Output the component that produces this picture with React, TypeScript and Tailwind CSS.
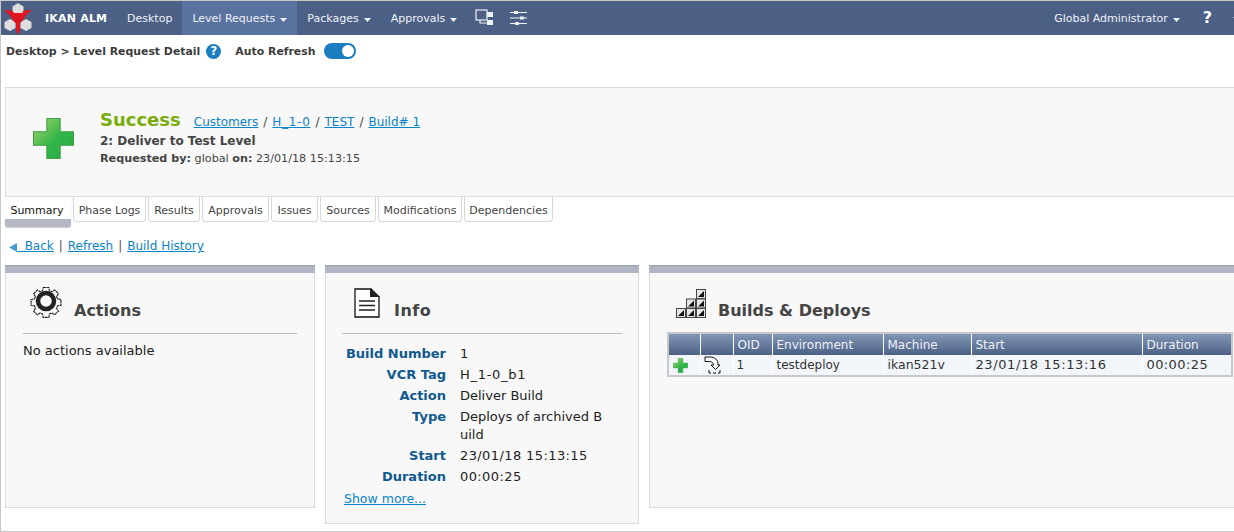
const font = "font-['DejaVu_Sans',Verdana,sans-serif]";

const Caret = () => (
  <svg width="7" height="4" viewBox="0 0 7 4" className="ml-[5px] mt-[2px]">
    <path d="M0 0h7L3.500 4z" fill="#eef1f6" />
  </svg>
);

const Logo = () => (
  <svg width="34" height="34" viewBox="0 0 34 34">
    <g fill="#dedede">
      <path d="M17 2l5.500 3.500v6L17 15l-5.500-3.500v-6z" />
      <path d="M9 18l5.500 3v6L9 30l-5.500-3v-6z" />
      <path d="M25 18l5.500 3v6L25 30l-5.500-3v-6z" />
    </g>
    <path d="M3 9l8 .5 2 2.500h8l2-2.500 8-.5-6 5-3 5-3 3v7L17 34l-2-4.500v-7l-3-3-3-5z" fill="#e0141c" />
  </svg>
);

const PlusIcon = ({ size, id }: { size: number; id: string }) => (
  <svg width={size} height={size} viewBox="0 0 40 40">
    <defs>
      <linearGradient id={id} x1="0" y1="0" x2="1" y2="1">
        <stop offset="0" stopColor="#a8d46a" />
        <stop offset="0.55" stopColor="#2fb54a" />
        <stop offset="1" stopColor="#2aa845" />
      </linearGradient>
    </defs>
    <path d="M13.500.5h13v13h13v13h-13v13h-13v-13H.5v-13h13z" fill={`url(#${id})`} stroke="#3f9f45" />
  </svg>
);

const Gear = () => (
  <svg width="34" height="34" viewBox="0 0 34 34">
    <circle cx="17" cy="17" r="8" fill="none" stroke="#222" strokeWidth="4.500" />
    <path
      d="M14 2.500h6l.7 3.600 2.600 1.100 3-2 4 4-2 3 1.100 2.600 3.600.7v6l-3.600.7-1.100 2.600 2 3-4 4-3-2-2.600 1.100-.7 3.600h-6l-.7-3.600-2.600-1.100-3 2-4-4 2-3-1.100-2.600-3.600-.7v-6l3.600-.7 1.100-2.600-2-3 4-4 3 2 2.600-1.100z"
      transform="translate(1.100 1.100) scale(0.935)"
      fill="none"
      stroke="#222"
      strokeWidth="1.200"
      strokeDasharray="3 0.6"
    />
  </svg>
);

const Doc = () => (
  <svg width="26" height="30" viewBox="0 0 26 30">
    <path d="M1 1h16l8 8v20H1z" fill="#fff" stroke="#111" strokeWidth="1.300" />
    <path d="M16 0l10 9H16z" fill="#222" />
    <path d="M5 13h16M5 17.500h16M5 22h16" stroke="#222" strokeWidth="1.600" />
  </svg>
);

const Block = ({ x, y }: { x: number; y: number }) => (
  <g transform={`translate(${x} ${y})`}>
    <rect x="0.5" y="0.5" width="9" height="9" fill="#e6e6e6" stroke="#444" />
    <path d="M2 8l6-6v6z" fill="#111" />
  </g>
);

const Blocks = () => (
  <svg width="30" height="29" viewBox="0 0 30 29">
    <Block x={20} y={0} />
    <Block x={10} y={9.500} />
    <Block x={20} y={9.500} />
    <Block x={0} y={19} />
    <Block x={10} y={19} />
    <Block x={20} y={19} />
  </svg>
);

const DeployIcon = () => (
  <svg width="18" height="18" viewBox="0 0 18 18">
    <path d="M1 1h5c5 0 8 3 8 7v1h2l-4.500 4.500L7 9h2.500c0-2-1.500-3.500-4-3.500H1z" fill="#fff" stroke="#111" strokeWidth="1" />
    <path d="M5 14v3h2M16 14v3h-2M9 17h3" fill="none" stroke="#111" strokeWidth="1" />
  </svg>
);

const Tabs = [
  { label: "Phase Logs", w: "w-[73px]" },
  { label: "Results", w: "w-[52px]" },
  { label: "Approvals", w: "w-[67px]" },
  { label: "Issues", w: "w-[47px]" },
  { label: "Sources", w: "w-[56px]" },
  { label: "Modifications", w: "w-[84px]" },
  { label: "Dependencies", w: "w-[89px]" },
];

const Info = [
  { k: "Build Number", v: "1", c: "" },
  { k: "VCR Tag", v: "H_1-0_b1", c: "tracking-[0.7px]" },
  { k: "Action", v: "Deliver Build", c: "" },
  { k: "Type", v: "Deploys of archived Build", c: "" },
  { k: "Start", v: "23/01/18 15:13:15", c: "tracking-[0.4px]" },
  { k: "Duration", v: "00:00:25", c: "tracking-[0.4px]" },
];

const Panel = ({ w, h, children }: { w: string; h: string; children: React.ReactNode }) => (
  <div className={`${w} ${h} shrink-0 border-x border-b border-[#dcdcdc] bg-[#f8f8f8]`}>
    <div className="h-[8px] -mx-px bg-[#b0b6c4] border-t border-[#9aa0ae]" />
    {children}
  </div>
);

const PanelTitle = ({ icon, title, mr, tc }: { icon: React.ReactNode; title: string; mr: string; tc?: string }) => (
  <div className="flex items-end h-[37px] mt-[12px]">
    <div className={mr}>{icon}</div>
    <h2 className={`text-[16px] leading-[22px] font-bold text-[#444] ${tc ?? ""}`}>{title}</h2>
  </div>
);

const Link = ({ children, className }: { children: React.ReactNode; className?: string }) => (
  <a className={`text-[#0a83c9] underline ${className ?? ""}`}>{children}</a>
);

const navItem = "px-[10px] pt-[2px] h-full flex items-center";

export default function App() {
  return (
    <div className={`${font} w-[1234px] h-[532px] overflow-hidden bg-white border-t border-l border-b border-[#c8c8c8] text-[#222]`}>
      <nav className="h-[34px] bg-[#4c6085] flex items-center text-[11px] text-[#eef1f6]">
        <div className="w-[34px] h-[34px] shrink-0"><Logo /></div>
        <span className="ml-[10px] pt-[2px] w-[72px] font-bold text-[11px] tracking-[0.2px] text-white whitespace-nowrap">IKAN ALM</span>
        <span className={navItem}>Desktop</span>
        <span className={`${navItem} bg-[#5a729f]`}>Level Requests<Caret /></span>
        <span className={navItem}>Packages<Caret /></span>
        <span className={navItem}>Approvals<Caret /></span>
        <svg width="20" height="18" viewBox="0 0 20 18" className="ml-[8px]">
          <rect x="1" y="1" width="11" height="10" fill="none" stroke="#eef1f6" strokeWidth="1.200" />
          <rect x="12" y="3" width="6" height="5" fill="#eef1f6" />
          <rect x="12" y="11" width="6" height="5" fill="#eef1f6" />
          <path d="M5 11v3h7" fill="none" stroke="#eef1f6" strokeWidth="1.200" />
        </svg>
        <svg width="18" height="16" viewBox="0 0 18 16" className="ml-[15px]">
          <path d="M0 2.500h17M0 8h17M0 13.500h17" stroke="#eef1f6" strokeWidth="1.200" />
          <rect x="4" y="1" width="4" height="3" fill="#eef1f6" />
          <rect x="10" y="6.500" width="4" height="3" fill="#eef1f6" />
          <rect x="5" y="12" width="4" height="3" fill="#eef1f6" />
        </svg>
        <span className="ml-auto pt-[2px] flex items-center">Global Administrator<Caret /></span>
        <span className="ml-[23px] text-[16px] font-bold text-white">?</span>
        <span className="ml-[16px] mr-[-6px]"><Caret /></span>
      </nav>

      <div className="h-[52px] flex items-start pt-[7px] pl-[5px] text-[10.900px] font-bold text-[#3c3c3c]">
        <span className="leading-[20px]">Desktop &gt; Level Request Detail</span>
        <span className="ml-[6px] w-[15px] h-[15px] mt-[2px] rounded-full bg-[#1b7cc0] text-white text-[12px] leading-[15px] text-center">?</span>
        <span className="ml-[14px] leading-[20px]">Auto Refresh</span>
        <span className="ml-[8px] mt-[1px] w-[32px] h-[16px] rounded-full bg-[#1b7cc0] flex items-center justify-end pr-[2px]">
          <span className="w-[12px] h-[12px] rounded-full bg-white" />
        </span>
      </div>

      <div className="ml-[4px] h-[110px] border-y border-l border-[#dcdcdc] bg-[#f8f8f8] flex">
        <div className="ml-[27px] mt-[30px]"><PlusIcon size={41} id="plusBig" /></div>
        <div className="ml-[26px] mt-[20px]">
          <div className="flex items-baseline">
            <span className="text-[18px] leading-[24px] font-bold text-[#7aad0a]">Success</span>
            <span className="ml-[13px] text-[12px] text-[#444]">
              <Link>Customers</Link><span className="mx-[5px]">/</span><Link className="tracking-[0.7px]">H_1-0</Link><span className="mx-[5px]">/</span><Link>TEST</Link><span className="mx-[5px]">/</span><Link>Build# 1</Link>
            </span>
          </div>
          <div className="text-[12px] leading-[19px] font-bold text-[#444]">2: Deliver to Test Level</div>
          <div className="text-[11.200px] leading-[16px] text-[#444]">
            <b>Requested by:</b> global <b>on:</b> 23/01/18 15:13:15
          </div>
        </div>
      </div>

      <div className="flex gap-[2px] ml-[4px] text-[11px] text-[#444]">
        <div className="w-[66px] h-[30px] rounded-b-[3px] bg-[#b3b8c4] shadow-[0_1px_1px_#ccc]">
          <div className="h-[22px] pr-[2px] bg-white text-[#111] leading-[28px] text-center">Summary</div>
        </div>
        {Tabs.map(t => (
          <div key={t.label} className={`${t.w} h-[25px] leading-[27px] text-center border border-t-0 border-[#d8d8d8] rounded-b-[4px]`}>{t.label}</div>
        ))}
      </div>

      <div className="ml-[8px] mt-[5px] h-[28px] flex items-center text-[12px] text-[#555]">
        <svg width="8" height="9" viewBox="0 0 8 9" className="mt-[2px]"><path d="M8 0v9L0 4.500z" fill="#4a9bd0" /></svg>
        <Link>&nbsp;&nbsp;Back</Link><span className="mx-[5px]">|</span><Link>Refresh</Link><span className="mx-[5px]">|</span><Link>Build History</Link>
      </div>

      <div className="flex items-start gap-[10px] ml-[4px] mt-[5px]">
        <Panel w="w-[310px]" h="h-[243px]">
          <div className="px-[17px]">
            <PanelTitle icon={<Gear />} title="Actions" mr="ml-[6px] mr-[11px] mb-[4px]" />
            <div className="border-t border-[#b8b8b8] mt-[11px] pt-[9px] text-[13px] leading-[16px] text-[#222]">No actions available</div>
          </div>
        </Panel>

        <Panel w="w-[314px]" h="h-[259px]">
          <div className="px-[16px]">
            <PanelTitle icon={<Doc />} title="Info" tc="tracking-[0.5px]" mr="ml-[12px] mr-[14px] mb-[4px]" />
            <div className="border-t border-[#b8b8b8] mt-[11px] pt-[11px] grid grid-cols-[104px_150px] gap-x-[14px] gap-y-[3px] text-[13px] leading-[18px]">
              {Info.map(r => (
                <div key={r.k} className="contents">
                  <div className="text-right font-bold text-[#10598f]">{r.k}</div>
                  <div className={`break-all text-[#222] ${r.c}`}>{r.v}</div>
                </div>
              ))}
            </div>
            <div className="mt-[4px] ml-[2px] text-[12.500px]"><Link>Show more...</Link></div>
          </div>
        </Panel>

        <Panel w="w-[600px]" h="h-[243px]">
          <div className="pl-[17px]">
            <PanelTitle icon={<Blocks />} title="Builds & Deploys" mr="ml-[9px] mr-[12px] mb-[4px]" />
            <table className="mt-[10px] w-[564px] table-fixed border-2 border-[#c8c8c8] border-collapse text-[12px]">
              <thead>
                <tr className="h-[22px] text-left text-[#eef1f6] font-normal">
                  {[
                    ["", "w-[32px]"],
                    ["", "w-[33px]"],
                    ["OID", "w-[39px]"],
                    ["Environment", "w-[111px]"],
                    ["Machine", "w-[88px]"],
                    ["Start", "w-[171px]"],
                    ["Duration", "w-[90px]"],
                  ].map(([h, w], i) => (
                    <th key={i} className={`${w} px-[4px] font-normal border-l border-white first:border-l-0 bg-gradient-to-b from-[#8296b6] to-[#4c6085]`}>{h}</th>
                  ))}
                </tr>
              </thead>
              <tbody>
                <tr className="h-[21px] bg-[#f2f6fb] text-[#333]">
                  <td className="pl-[4px] border-r border-white"><PlusIcon size={15} id="plusSmall" /></td>
                  <td className="pl-[3px] border-r border-white"><DeployIcon /></td>
                  <td className="px-[3px] border-r border-white">1</td>
                  <td className="px-[4px] border-r border-white">testdeploy</td>
                  <td className="px-[4px] border-r border-white text-[12.500px]">ikan521v</td>
                  <td className="px-[4px] border-r border-white text-[13px] tracking-[0.6px]">23/01/18 15:13:16</td>
                  <td className="px-[4px] text-[13px] tracking-[0.4px]">00:00:25</td>
                </tr>
              </tbody>
            </table>
          </div>
        </Panel>
      </div>
    </div>
  );
}
